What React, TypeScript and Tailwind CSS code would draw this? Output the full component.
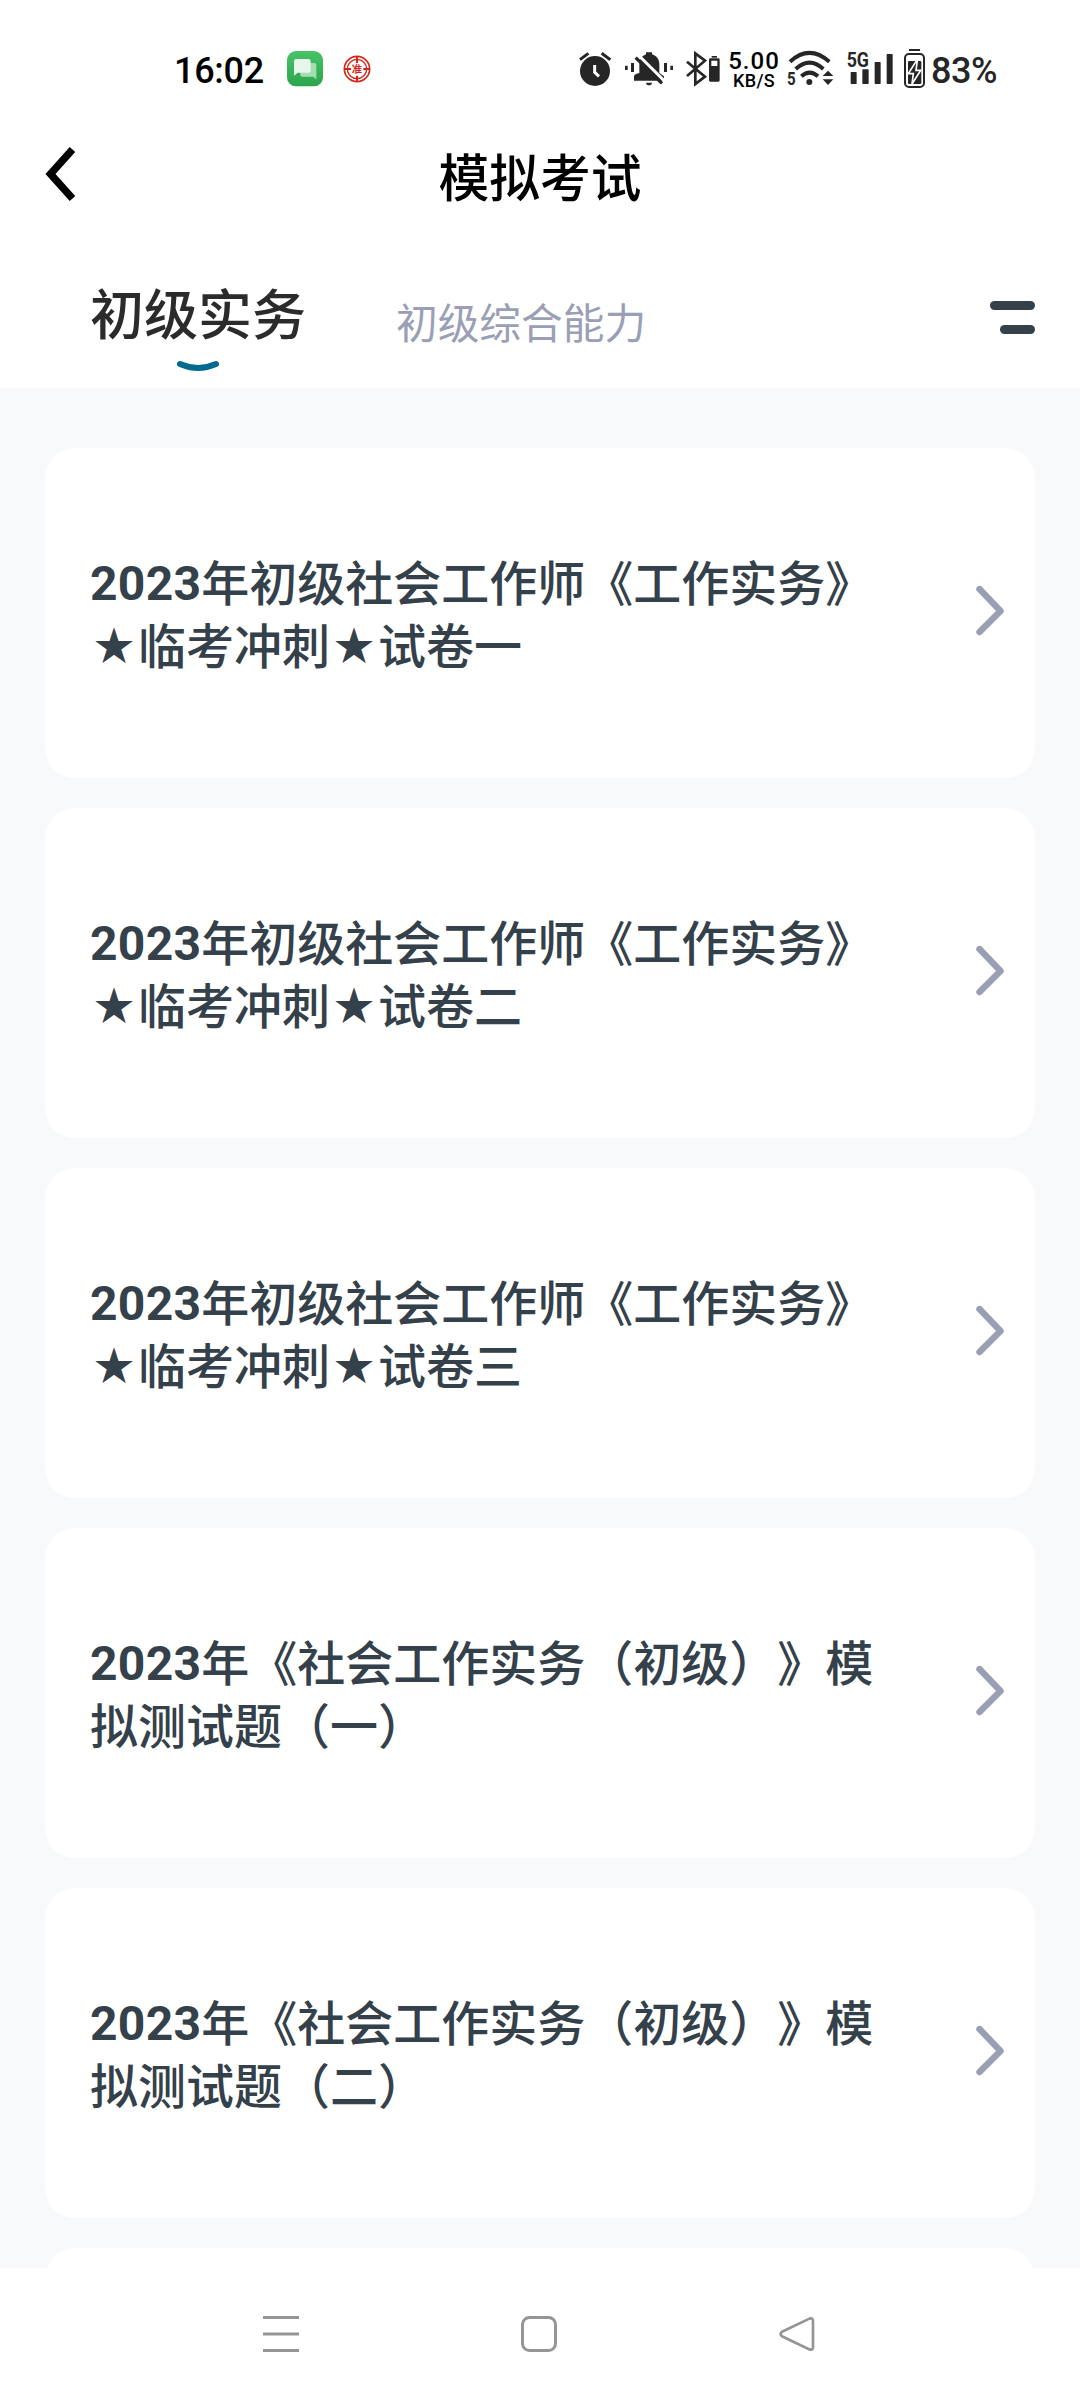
import type { ReactNode } from "react";

const exams = [
  ["2023年初级社会工作师《工作实务》", "★临考冲刺★试卷一"],
  ["2023年初级社会工作师《工作实务》", "★临考冲刺★试卷二"],
  ["2023年初级社会工作师《工作实务》", "★临考冲刺★试卷三"],
  ["2023年《社会工作实务（初级）》模", "拟测试题（一）"],
  ["2023年《社会工作实务（初级）》模", "拟测试题（二）"]
];

type StatusIconProps = {
  viewBox: string;
  className: string;
  children: ReactNode;
};

function StatusIcon({ viewBox, className, children }: StatusIconProps) {
  return (
    <svg viewBox={viewBox} className={`h-10 shrink-0 ${className}`} fill="#262626" stroke="none">
      {children}
    </svg>
  );
}

function StatusBar() {
  return (
    <div className="flex h-[138px] items-start pt-[49px] pl-[174px] text-[#262626]">
      <span className="w-[113px] pt-px text-[36px] leading-[42px] font-medium tracking-[-0.3px] text-black">16:02</span>
      <svg viewBox="0 0 108 108" className="mt-0.5 h-9 w-9 shrink-0">
        <defs>
          <linearGradient id="chat" x1="0" y1="0" x2="0" y2="1">
            <stop offset="0" stopColor="#48c368" />
            <stop offset="1" stopColor="#2aa54c" />
          </linearGradient>
        </defs>
        <rect width="108" height="106" rx="27" fill="url(#chat)" />
        <path d="M46 36h36q6 0 6 6v43l-10-8H46q-6 0-6-6V42q0-6 6-6z" fill="#a5dcb3" />
        <path d="M27 24h38q6 0 6 6v29q0 6-6 6H32l-11 9V30q0-6 6-6z" fill="#e6f6ea" />
      </svg>
      <svg viewBox="0 0 84 84" className="mt-1.5 ml-5 h-7 w-7 shrink-0" fill="none" stroke="#d3271b">
        <circle cx="42" cy="42" r="38" strokeWidth="5" />
        <circle cx="42" cy="42" r="29" strokeWidth="4" />
        <path d="M42 4v20M42 62v18M4 42h20M61 42h19" strokeWidth="6" />
        <rect x="26" y="26" width="32" height="33" fill="#fff" stroke="none" />
        <text x="42" y="53" textAnchor="middle" fontSize="31" fontWeight="700" fill="#d3271b" stroke="none">
          准
        </text>
      </svg>

      <StatusIcon viewBox="57 42 99 120" className="ml-[208px] w-[33px]">
        <circle cx="105" cy="108" r="45" />
        <path d="M60 74l25-19M125 55l26 19" stroke="#262626" strokeWidth="9" />
        <path d="M104 90v22l13 12" fill="none" stroke="#fff" strokeWidth="9" />
      </StatusIcon>
      <StatusIcon viewBox="195 42 144 120" className="ml-[13px] w-12">
        <path d="M258 52h18v6c14 5 22 15 22 30v26l14 10v13h-90v-13q0-6 8-8l8-2V88c0-15 8-25 20-30z" />
        <path d="M258 143h18q-1 8-9 8t-9-8z" />
        <path d="M195 92h8v13h-8zM213 84h9v27h-9zM312 84h9v27h-9zM331 92h8v13h-8z" />
        <path d="M235 60l80 80" stroke="#fff" strokeWidth="9" />
        <path d="M227 68l79 77" stroke="#262626" strokeWidth="10" />
      </StatusIcon>
      <StatusIcon viewBox="378 42 102 120" className="ml-[13px] w-[34px]">
        <path d="M381 80l54 45-29 22V55l29 22-54 46" fill="none" stroke="#262626" strokeWidth="8" />
        <path d="M455 63h16v5h-16z" />
        <path fillRule="evenodd" d="M451 70h24q4 0 4 4v62q0 4-4 4h-24q-4 0-4-4V74q0-4 4-4zm3 7v16h18V77z" />
      </StatusIcon>
      <div className="ml-2 flex w-[52px] flex-col items-center font-medium text-black">
        <span className="text-[24px] leading-[24px] tracking-[1px]">5.00</span>
        <span className="text-[18px] leading-[15px] tracking-[0.3px]">KB/S</span>
      </div>
      <StatusIcon viewBox="51 42 141 120" className="ml-[7px] w-[47px]">
        <text x="51" y="150" fontSize="53" fontWeight="700" textLength="26" lengthAdjust="spacingAndGlyphs">
          5
        </text>
        <g fill="none" stroke="#262626" strokeWidth="12">
          <path d="M60 80q58-53 118 0" />
          <path d="M77 102q42-38 83 0" />
          <path d="M94 124q25-22 50 0" />
        </g>
        <circle cx="118" cy="141" r="9" />
        <path d="M174 107l16 16h-32zM158 133h32l-16 17z" />
      </StatusIcon>
      <StatusIcon viewBox="231 42 141 120" className="ml-[13px] w-[47px]">
        <text x="230" y="95" fontSize="58" fontWeight="700" textLength="67" lengthAdjust="spacingAndGlyphs">
          5G
        </text>
        <rect x="242" y="111" width="18" height="36" rx="2" />
        <rect x="277" y="103" width="19" height="44" rx="2" />
        <rect x="314" y="81" width="18" height="66" rx="2" />
        <rect x="350" y="57" width="18" height="90" rx="2" />
      </StatusIcon>
      <StatusIcon viewBox="402 42 63 120" className="ml-[10px] w-[21px]">
        <path d="M417 42h33v6h-33z" />
        <rect x="405" y="57" width="57" height="99" rx="12" fill="none" stroke="#262626" strokeWidth="6" />
        <rect x="414" y="78" width="40" height="69" rx="4" />
        <path d="M440 76l-25 40h15l-4 31 26-41h-14l4-30z" stroke="#fff" strokeWidth="5" />
      </StatusIcon>
      <span className="ml-1.5 pt-px text-[36px] leading-[42px] font-medium tracking-[-0.4px]">83%</span>
    </div>
  );
}

function Header() {
  return (
    <header className="flex h-[78px] items-center px-[45px]">
      <svg viewBox="0 0 30 56" className="-mt-1.5 h-14 w-[30px]" fill="none" stroke="#000" strokeWidth="7.500">
        <path d="M27.500 3.500L5.500 28l22 24.500" />
      </svg>
      <h1 className="flex-1 pt-1.5 text-center text-[50.700px] leading-[72px] font-medium text-black">模拟考试</h1>
      <div className="w-[30px]" />
    </header>
  );
}

function Tabs() {
  return (
    <nav className="flex h-[172px] items-start pr-[45px] pl-[90px]">
      <div className="flex flex-col items-center pt-[61px]">
        <span className="text-[54px] leading-[80px] font-medium text-[#2b2b2b]">初级实务</span>
        <svg viewBox="0 0 44 12" className="mt-[3px] h-3 w-11" fill="none" stroke="#04698f" strokeWidth="6" strokeLinecap="round">
          <path d="M4 4Q22 12 40 4" />
        </svg>
      </div>
      <span className="ml-[90px] pt-[79px] text-[41.700px] leading-[60px] text-[#9b9fb6]">初级综合能力</span>
      <div className="mt-[85px] ml-auto flex flex-col items-end gap-[15px]">
        <div className="h-[9px] w-[45px] rounded-full bg-[#34404a]" />
        <div className="h-[9px] w-[35px] rounded-full bg-[#34404a]" />
      </div>
    </nav>
  );
}

function TitlePart({ text }: { text: string }) {
  if (text === "★") {
    return <span className="inline-block w-12 -translate-y-1 text-center text-[40px] leading-[40px]">{text}</span>;
  }
  if (text === "2023") {
    return <span className="inline-block -translate-y-px font-bold tracking-[0.3px]">{text}</span>;
  }
  return <span>{text}</span>;
}

function ExamCard({ lines }: { lines: string[] }) {
  return (
    <article className="flex h-[330px] shrink-0 items-center justify-between rounded-[30px] bg-white pr-[30px] pl-[45px]">
      <h2 className="pt-[5px] text-[48px] leading-[63px] font-medium text-[#34404a] [text-spacing-trim:space-all]">
        {lines.map((line) => (
          <span key={line} className="block h-[63px] whitespace-nowrap">
            {line
              .split(/(★|2023)/)
              .filter(Boolean)
              .map((part, i) => (
                <TitlePart key={i} text={part} />
              ))}
          </span>
        ))}
      </h2>
      <svg
        viewBox="0 0 30 50"
        className="-mt-1 h-[50px] w-[30px]"
        fill="none"
        stroke="#9b9fb6"
        strokeWidth="6.500"
        strokeLinecap="round"
        strokeLinejoin="round"
      >
        <path d="M4.500 3L25.500 25 4.500 46" />
      </svg>
    </article>
  );
}

function NavigationBar() {
  return (
    <footer className="flex h-[132px] shrink-0 justify-between bg-white pt-12 pr-[265px] pl-[263px]">
      <svg viewBox="0 0 36 36" className="h-9 w-9" stroke="#959595" strokeWidth="3">
        <path d="M0 1.500h36M0 18h36M0 34.500h36" />
      </svg>
      <svg viewBox="0 0 36 36" className="h-9 w-9" fill="none" stroke="#959595" strokeWidth="3">
        <rect x="1.500" y="1.500" width="33" height="33" rx="7" />
      </svg>
      <svg viewBox="0 0 36 36" className="h-9 w-9" fill="none" stroke="#959595" strokeWidth="2.700">
        <path d="M30.500 2.600L3.500 15.500q-4 2.500 0 5l27 12.900q3.500 1.200 3.500-2.400V5q0-3.600-3.500-2.400z" />
      </svg>
    </footer>
  );
}

export default function App() {
  return (
    <div className="flex h-[2400px] w-[1080px] flex-col overflow-hidden bg-white font-[Roboto,'Noto_Sans_CJK_SC',sans-serif]">
      <StatusBar />
      <Header />
      <Tabs />
      <main className="flex h-[1880px] flex-col gap-[30px] overflow-hidden bg-[#f7f9fb] px-[45px] pt-[60px]">
        {exams.map((lines) => (
          <ExamCard key={lines.join("")} lines={lines} />
        ))}
        <div className="h-[330px] shrink-0 rounded-[30px] bg-white" />
      </main>
      <NavigationBar />
    </div>
  );
}
